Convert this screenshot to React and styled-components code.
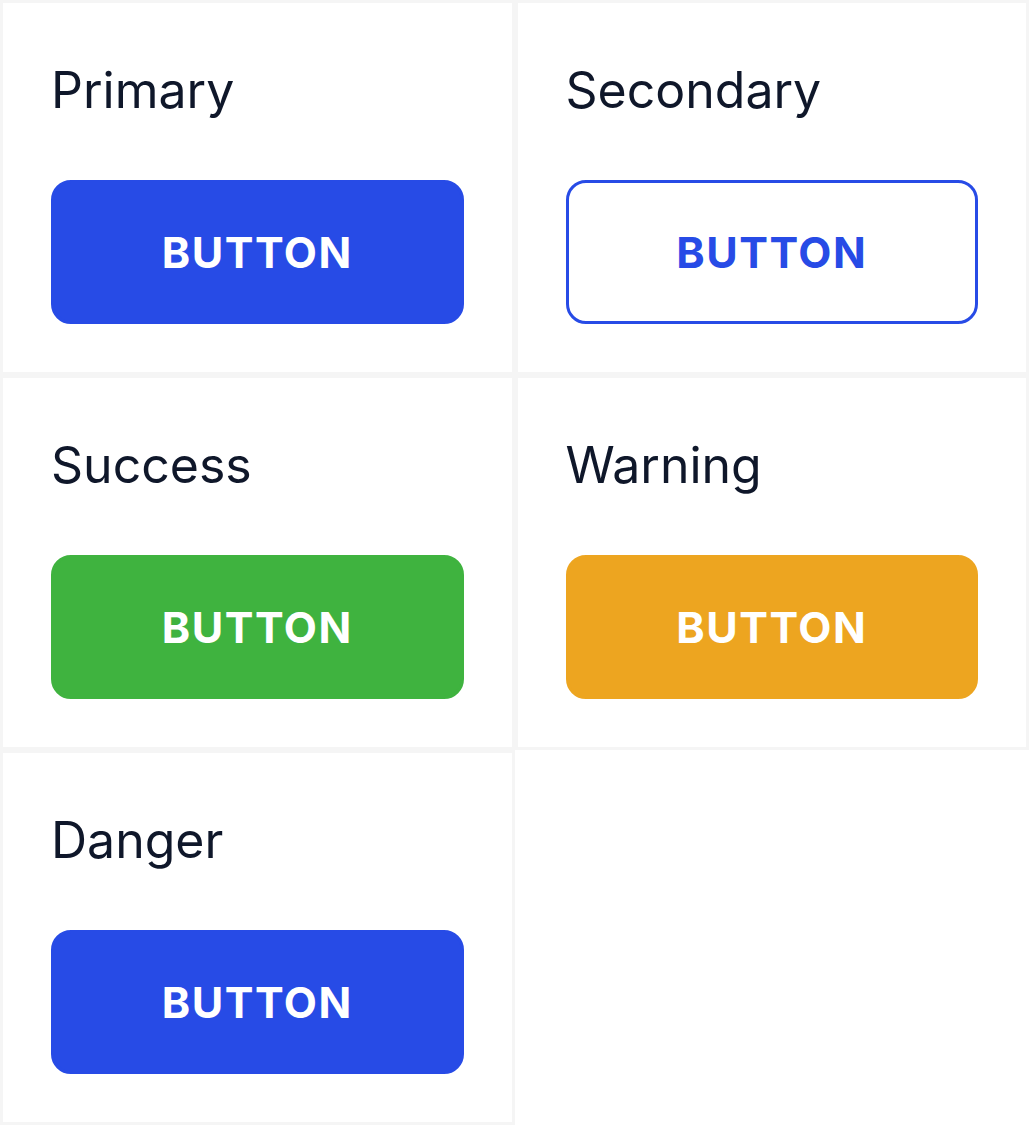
import React from "react";
import styled, { createGlobalStyle, css } from "styled-components";

const GlobalStyle = createGlobalStyle`
    html, body {
        margin: 0;
        padding: 0;
        background: #ffffff;
    }

    body {
        font-family: Inter, "Noto Sans", Arial, sans-serif;
        -webkit-font-smoothing: antialiased;
    }
`;

const palette = {
    primary: "#274be6",
    secondary: "#274be6",
    success: "#3fb33f",
    warning: "#eda520",
    danger: "#274be6",
};

const Grid = styled.div`
    display: grid;
    grid-template-columns: 1fr 1fr;
    width: 100%;
`;

const Card = styled.div`
    display: flex;
    flex-direction: column;
    border: 3px solid #f5f5f5;
    padding: 48px;
    min-width: 0;
`;

const Title = styled.h2`
    margin: 0 0 51px;
    font-size: 50px;
    font-weight: 400;
    line-height: 78px;
    color: #0f172a;
`;

const Button = styled.button`
    display: flex;
    align-items: center;
    justify-content: center;
    width: 100%;
    height: 144px;
    border-radius: 20px;
    font-family: inherit;
    font-size: 43px;
    font-weight: 700;
    letter-spacing: 1.5px;
    cursor: pointer;
    border: 3px solid ${({ $color }) => $color};
    background: ${({ $color }) => $color};
    color: #ffffff;

    ${({ $outline, $color }) =>
        $outline &&
        css`
            background: #ffffff;
            color: ${$color};
        `}
`;

const variants = [
    { name: "Primary", color: palette.primary },
    { name: "Secondary", color: palette.secondary, outline: true },
    { name: "Success", color: palette.success },
    { name: "Warning", color: palette.warning },
    { name: "Danger", color: palette.danger },
];

export default function App() {
    return (
        <>
            <GlobalStyle />
            <Grid>
                {variants.map((v) => (
                    <Card key={v.name}>
                        <Title>{v.name}</Title>
                        <Button $color={v.color} $outline={v.outline}>
                            BUTTON
                        </Button>
                    </Card>
                ))}
            </Grid>
        </>
    );
}
